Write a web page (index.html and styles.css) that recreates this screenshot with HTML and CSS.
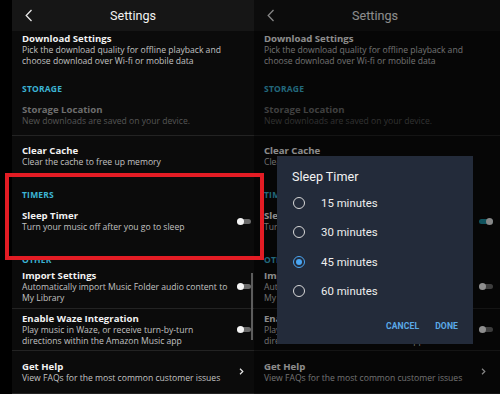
FILE: index.html
```html
<!DOCTYPE html>
<html>
<head>
<meta charset="utf-8">
<link rel="stylesheet" href="styles.css">
</head>
<body>
<div class="phone phone-left">
  <div class="screen">
    <header class="bar">
      <span class="back"><svg width="8" height="13" viewBox="0 0 8 13"><polyline points="6.5,1 1.2,6.5 6.5,12" fill="none" stroke="#e6e6e6" stroke-width="1.3"/></svg></span>
      <h1 class="bar-title">Settings</h1>
      <span></span>
    </header>
    <div class="item i-download">
      <div class="text"><div class="title">Download Settings</div><div class="desc">Pick the download quality for offline playback and<br>choose download over Wi-fi or mobile data</div></div>
    </div>
    <div class="label l-storage">STORAGE</div>
    <div class="item i-storage sep disabled">
      <div class="text"><div class="title">Storage Location</div><div class="desc">New downloads are saved on your device.</div></div>
    </div>
    <div class="item i-cache">
      <div class="text"><div class="title">Clear Cache</div><div class="desc">Clear the cache to free up memory</div></div>
    </div>
    <div class="label l-timers">TIMERS</div>
    <div class="item i-sleep">
      <div class="text"><div class="title">Sleep Timer</div><div class="desc">Turn your music off after you go to sleep</div></div>
      <span class="switch"></span>
    </div>
    <div class="label l-other">OTHER</div>
    <div class="item i-import sep">
      <div class="text"><div class="title">Import Settings</div><div class="desc">Automatically import Music Folder audio content to<br>My Library</div></div>
      <span class="switch"></span>
    </div>
    <div class="item i-waze sep">
      <div class="text"><div class="title">Enable Waze Integration</div><div class="desc">Play music in Waze, or receive turn-by-turn<br>directions within the Amazon Music app</div></div>
      <span class="switch"></span>
    </div>
    <div class="item i-help sep">
      <div class="text"><div class="title">Get Help</div><div class="desc">View FAQs for the most common customer issues</div></div>
      <span class="chev"><svg width="5" height="7" viewBox="0 0 5 7"><polyline points="1,0.8 3.8,3.5 1,6.2" fill="none" stroke="#e6e6e6" stroke-width="1.2"/></svg></span>
    </div>
  </div>
  <div class="scrollbar"></div>
</div>

<div class="phone phone-right">
  <div class="screen">
    <header class="bar">
      <span class="back"><svg width="8" height="13" viewBox="0 0 8 13"><polyline points="6.5,1 1.2,6.5 6.5,12" fill="none" stroke="#e6e6e6" stroke-width="1.3"/></svg></span>
      <h1 class="bar-title">Settings</h1>
      <span></span>
    </header>
    <div class="item i-download">
      <div class="text"><div class="title">Download Settings</div><div class="desc">Pick the download quality for offline playback and<br>choose download over Wi-fi or mobile data</div></div>
    </div>
    <div class="label l-storage">STORAGE</div>
    <div class="item i-storage sep disabled">
      <div class="text"><div class="title">Storage Location</div><div class="desc">New downloads are saved on your device.</div></div>
    </div>
    <div class="item i-cache">
      <div class="text"><div class="title">Clear Cache</div><div class="desc">Clear the cache to free up memory</div></div>
    </div>
    <div class="label l-timers">TIMERS</div>
    <div class="item i-sleep">
      <div class="text"><div class="title">Sleep Timer</div><div class="desc">Turn your music off after you go to sleep</div></div>
      <span class="switch on"></span>
    </div>
    <div class="label l-other">OTHER</div>
    <div class="item i-import sep">
      <div class="text"><div class="title">Import Settings</div><div class="desc">Automatically import Music Folder audio content to<br>My Library</div></div>
      <span class="switch"></span>
    </div>
    <div class="item i-waze sep">
      <div class="text"><div class="title">Enable Waze Integration</div><div class="desc">Play music in Waze, or receive turn-by-turn<br>directions within the Amazon Music app</div></div>
      <span class="switch"></span>
    </div>
    <div class="item i-help sep">
      <div class="text"><div class="title">Get Help</div><div class="desc">View FAQs for the most common customer issues</div></div>
      <span class="chev"><svg width="5" height="7" viewBox="0 0 5 7"><polyline points="1,0.8 3.8,3.5 1,6.2" fill="none" stroke="#e6e6e6" stroke-width="1.2"/></svg></span>
    </div>
  </div>
  <div class="dim"></div>
  <div class="dialog">
    <div class="dlg-title">Sleep Timer</div>
    <div class="options">
      <div class="opt"><span class="radio"></span><span>15 minutes</span></div>
      <div class="opt"><span class="radio"></span><span>30 minutes</span></div>
      <div class="opt"><span class="radio checked"></span><span>45 minutes</span></div>
      <div class="opt"><span class="radio"></span><span>60 minutes</span></div>
    </div>
    <div class="actions"><span class="btn">CANCEL</span><span class="btn">DONE</span></div>
  </div>
</div>

<div class="highlight"></div>
</body>
</html>
```
FILE: styles.css
```css
html, body {
  margin: 0;
  padding: 0;
}
body {
  width: 500px;
  height: 394px;
  overflow: hidden;
  background: #000;
  display: flex;
  position: relative;
  font-family: "Open Sans", "Noto Sans", sans-serif;
  color: #f0f0f0;
}
.phone {
  position: relative;
  flex-shrink: 0;
  height: 394px;
  overflow: hidden;
}
.phone-left {
  width: 254px;
  padding-left: 12px;
  box-sizing: border-box;
}
.phone-right {
  width: 246px;
}
.screen {
  width: 246px;
  height: 394px;
  background: #0b0b0b;
}
.bar {
  height: 31px;
  background: #161616;
  display: grid;
  grid-template-columns: 30px 1fr 30px;
  align-items: center;
  padding-right: 4px;
}
.back {
  display: flex;
  padding-left: 13px;
}
.bar-title {
  margin: 0;
  text-align: center;
  font-family: Roboto, "Open Sans", sans-serif;
  font-weight: 400;
  font-size: 12.6px;
  color: #f2f2f2;
  line-height: 14px;
}
.item {
  display: flex;
  align-items: center;
  padding: 0 7px 0 10px;
}
.sep {
  border-bottom: 1px solid #232323;
}
.text {
  flex: 1;
  min-width: 0;
}
.title {
  font-weight: 700;
  font-size: 9.6px;
  line-height: 12px;
  color: #f2f2f2;
  white-space: nowrap;
}
.desc {
  font-size: 8.6px;
  line-height: 10.5px;
  color: #c2c2c2;
  white-space: nowrap;
}
.disabled .title { color: #6e6e6e; }
.disabled .desc { color: #565656; }
.label {
  padding-left: 10px;
  font-weight: 700;
  font-size: 8.5px;
  line-height: 12px;
  letter-spacing: 0.2px;
  color: #3cb4d4;
}
.i-download { padding-top: 2px; }
.l-storage { margin-top: 16.5px; }
.i-storage { padding-top: 9.5px; padding-bottom: 8.5px; }
.i-cache { padding-top: 9px; }
.l-timers { margin-top: 21.5px; }
.i-sleep { padding-top: 9px; }
.l-other { margin-top: 21.5px; }
.i-import { padding-top: 4px; padding-bottom: 5px; }
.i-waze { padding-top: 4px; padding-bottom: 4px; }
.i-help { padding-top: 9.5px; padding-bottom: 9.5px; }

.switch {
  position: relative;
  width: 14px;
  height: 5px;
  border-radius: 3px;
  background: #6a6a6a;
  flex-shrink: 0;
}
.switch::after {
  content: "";
  position: absolute;
  left: 0;
  top: -1px;
  width: 7px;
  height: 7px;
  border-radius: 50%;
  background: #f4f4f4;
}
.switch.on {
  background: #1d8ea0;
}
.switch.on::after {
  left: auto;
  right: 0;
  background: #e8e8e8;
}
.chev {
  display: flex;
  margin-right: 7px;
}
.scrollbar {
  position: absolute;
  left: 251px;
  top: 273px;
  width: 2px;
  height: 67px;
  background: #5c5c5c;
}
.dim {
  position: absolute;
  inset: 0;
  background: rgba(0, 0, 0, 0.42);
}
.dialog {
  position: absolute;
  left: 23px;
  top: 156px;
  width: 196px;
  height: 188px;
  box-sizing: border-box;
  background: #232b3a;
  padding: 12.5px 15px 0 15px;
  font-family: Roboto, "Open Sans", sans-serif;
  display: flex;
  flex-direction: column;
}
.dlg-title {
  font-size: 12.6px;
  line-height: 15px;
  color: #f2f2f2;
}
.options {
  margin-top: 4.8px;
}
.opt {
  height: 29.4px;
  display: flex;
  align-items: center;
  gap: 16px;
  font-size: 11.4px;
  color: #eeeeee;
}
.radio {
  width: 12px;
  height: 12px;
  box-sizing: border-box;
  border: 1.5px solid #d8d8d8;
  border-radius: 50%;
  flex-shrink: 0;
  display: flex;
  align-items: center;
  justify-content: center;
  margin-left: 1px;
}
.radio.checked {
  border-color: #4aa6f2;
}
.radio.checked::after {
  content: "";
  width: 6px;
  height: 6px;
  border-radius: 50%;
  background: #4aa6f2;
}
.actions {
  margin-top: 10px;
  height: 20px;
  display: flex;
  justify-content: flex-end;
  align-items: center;
  gap: 16px;
}
.btn {
  font-weight: 700;
  font-size: 8.6px;
  letter-spacing: 0.1px;
  color: #5aa9e8;
}
.highlight {
  position: absolute;
  left: 5px;
  top: 173px;
  width: 259px;
  height: 87px;
  box-sizing: border-box;
  border: 4px solid #e31c24;
  z-index: 5;
}
```
